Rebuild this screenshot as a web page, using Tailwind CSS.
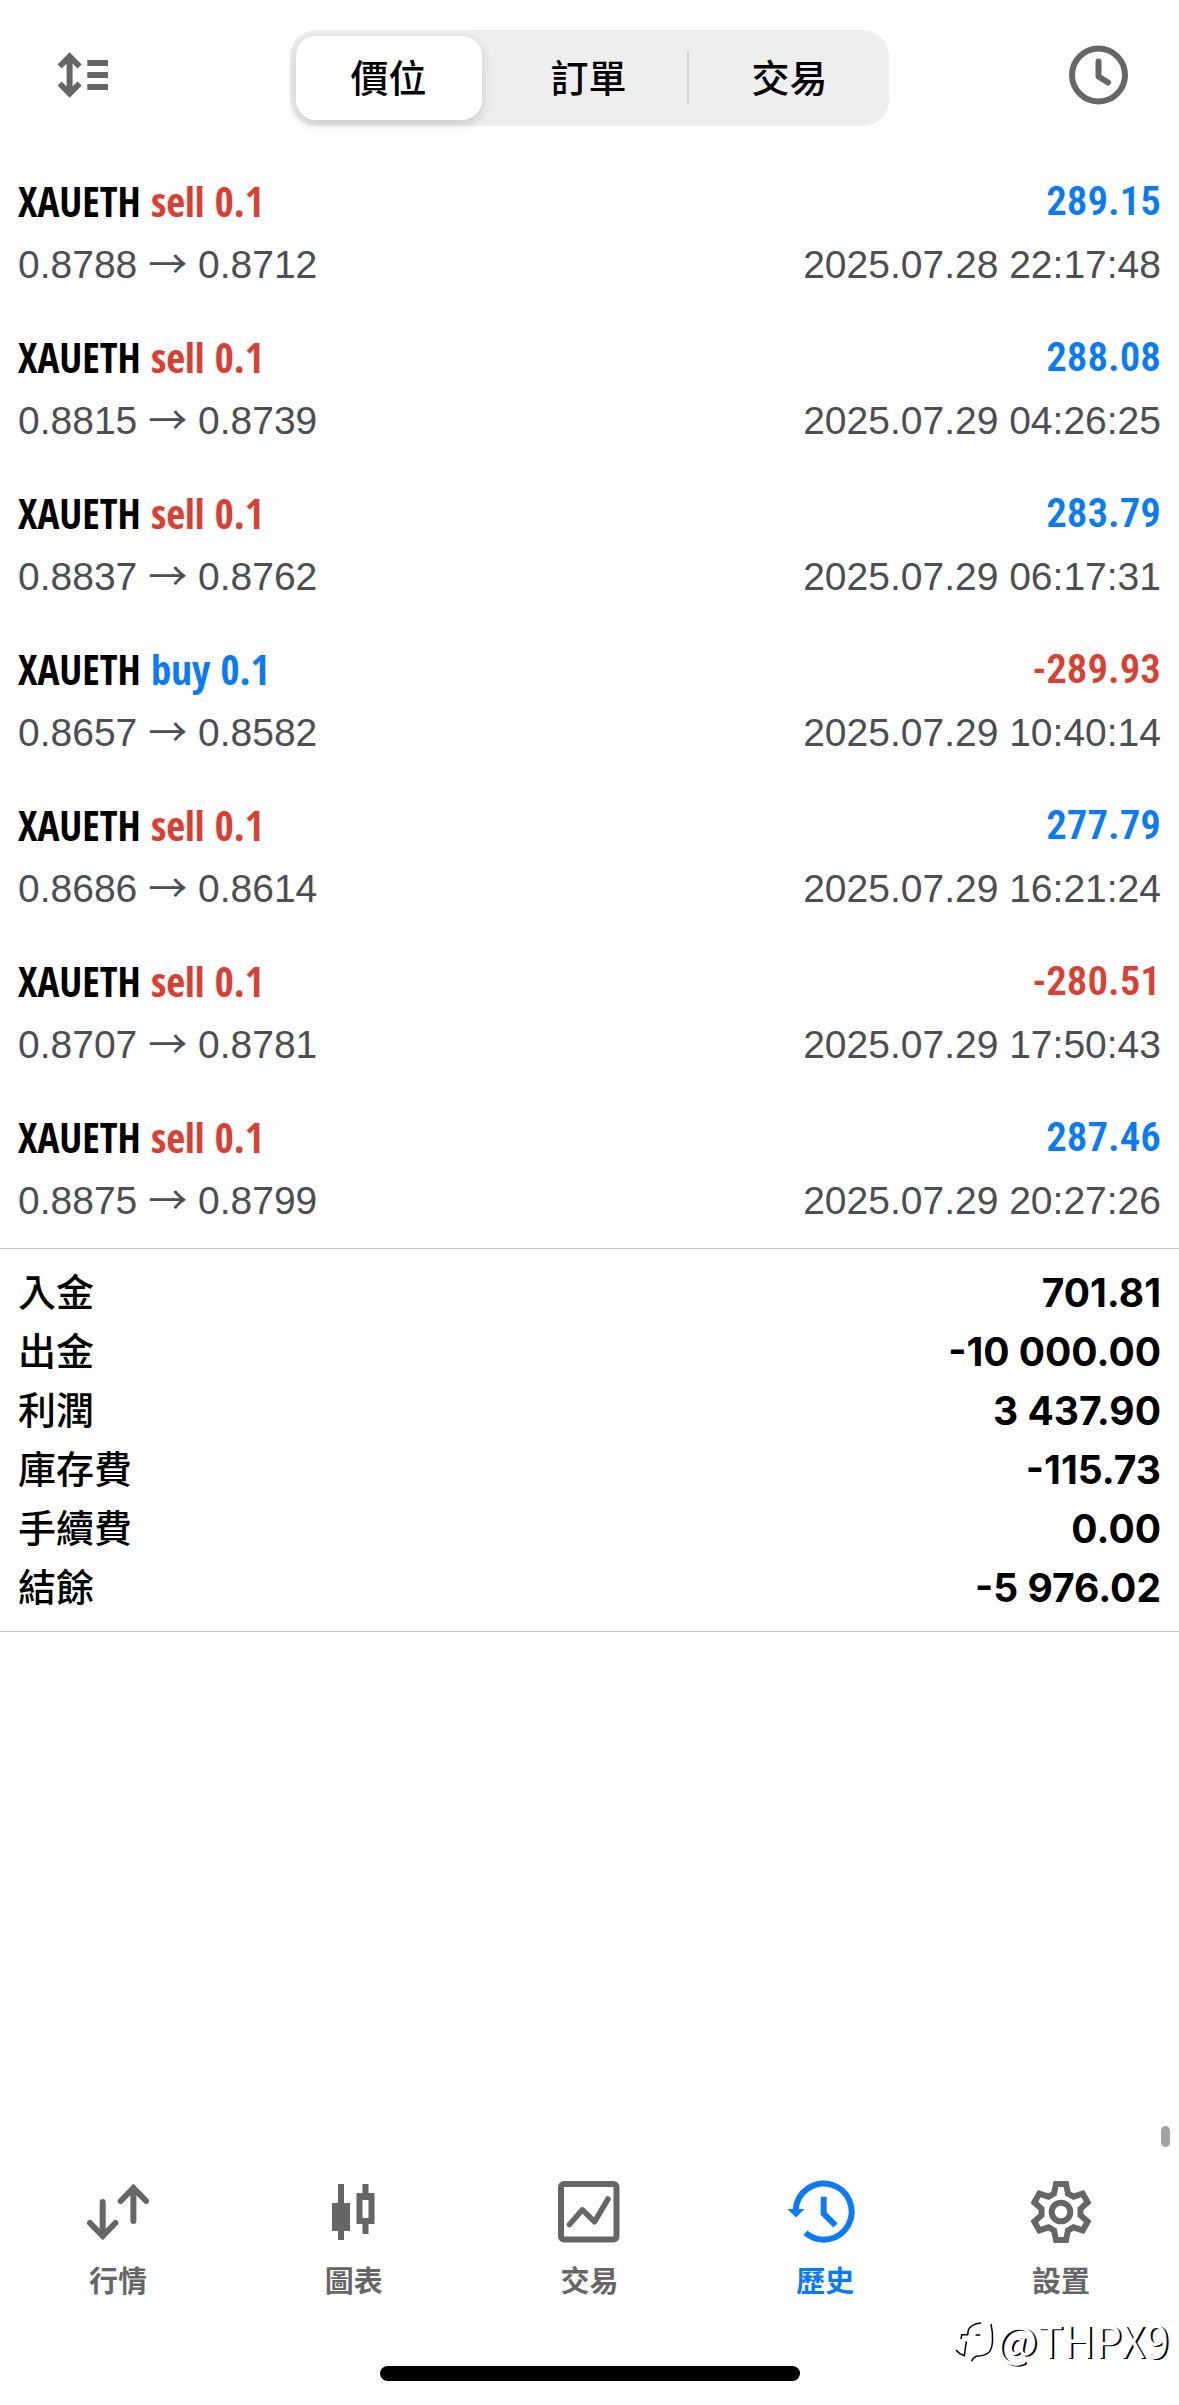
<!DOCTYPE html>
<html lang="zh-Hant">
<head>
<meta charset="utf-8">
<meta name="viewport" content="width=device-width, initial-scale=1">
<title>歷史</title>
<script src="https://cdn.jsdelivr.net/npm/@tailwindcss/browser@4"></script>
</head>
<body class="bg-white text-black font-['Inter','Noto_Sans_CJK_TC',sans-serif]">
<div class="relative flex min-h-screen flex-col">

  <header class="grid grid-cols-[1fr_56%_1fr] items-center px-[54px] py-[30px]">
    <button type="button" aria-label="排序" class="justify-self-start pb-1.5">
      <svg class="block h-[54px] w-[58px]" viewBox="0 0 58 54" fill="none" stroke="#666" stroke-width="6">
        <path d="M15.6 8V46M5.6 18.5L15.6 8.5L25.6 18.5M5.6 35.5L15.6 45.5L25.6 35.5M33.3 15H54M33.3 27H54M33.3 39H54"/>
      </svg>
    </button>
    <div role="group" aria-label="檢視" class="grid h-24 grid-cols-3 rounded-[26px] bg-[#eeeeef] text-[38px] leading-10 font-medium">
      <button type="button" aria-pressed="true" class="my-1.5 mr-2 ml-1.5 rounded-[20px] bg-white shadow-[0_4px_12px_rgba(0,0,0,0.16)]">價位</button>
      <button type="button" aria-pressed="false" class="my-[21px] border-r-2 border-[#d3d3d5]">訂單</button>
      <button type="button" aria-pressed="false">交易</button>
    </div>
    <button type="button" aria-label="時間範圍" class="justify-self-end pb-1.5">
      <svg class="block size-[54px] overflow-visible" viewBox="0 0 54 54" fill="none" stroke="#666" stroke-width="6" stroke-linecap="round" stroke-linejoin="round">
        <circle cx="27.5" cy="27" r="26.5"/>
        <path d="M27.5 13.5V28.5L37 34.5"/>
      </svg>
    </button>
  </header>

  <main class="grow">
    <ul id="deals"></ul>

    <dl class="grid grid-cols-[auto_1fr] border-y border-[#c8c8ca] px-[18px] py-3.5 text-[39px] leading-[59px]">
      <dt class="text-[38px] font-medium">入金</dt><dd class="text-right font-bold">701.81</dd>
      <dt class="text-[38px] font-medium">出金</dt><dd class="text-right font-bold">-10 000.00</dd>
      <dt class="text-[38px] font-medium">利潤</dt><dd class="text-right font-bold">3 437.90</dd>
      <dt class="text-[38px] font-medium">庫存費</dt><dd class="text-right font-bold">-115.73</dd>
      <dt class="text-[38px] font-medium">手續費</dt><dd class="text-right font-bold">0.00</dd>
      <dt class="text-[38px] font-medium">結餘</dt><dd class="text-right font-bold">-5 976.02</dd>
    </dl>
  </main>

  <nav class="grid grid-cols-5 text-[29px] leading-9 font-bold text-[#666]">
    <a href="#quotes" class="flex flex-col items-center gap-4">
      <svg class="size-[72px]" viewBox="0 0 72 72" fill="none" stroke="currentColor" stroke-width="6" stroke-linecap="round">
        <path d="M20.7 26V60M8 47L20.7 60L33.4 47M51.4 45V12M38.7 25L51.4 12L64.1 25"/>
      </svg>
      行情
    </a>
    <a href="#charts" class="flex flex-col items-center gap-4">
      <svg class="size-[72px]" viewBox="0 0 72 72" fill="currentColor">
        <path d="M20 8h6v19h6v28h-6v9h-6v-9h-6V27h6z"/>
        <path fill-rule="evenodd" d="M44.5 8h6v9h6v31h-6v10h-6V48h-6V17h6zM44.5 24v18h6V24z"/>
      </svg>
      圖表
    </a>
    <a href="#trade" class="flex flex-col items-center gap-4">
      <svg class="size-[72px]" viewBox="0 0 72 72" fill="none" stroke="currentColor" stroke-width="6" stroke-linecap="round" stroke-linejoin="round">
        <rect x="8" y="8" width="55.5" height="55.5" rx="3"/>
        <path stroke-width="5.5" d="M16.5 48.5L29.3 33.8L41.5 45.8L55 23"/>
      </svg>
      交易
    </a>
    <a href="#history" aria-current="page" class="flex flex-col items-center gap-4 text-[#0a7af5]">
      <svg class="size-[72px] overflow-visible" viewBox="0 0 72 72" fill="none" stroke="currentColor" stroke-width="6">
        <path d="M6.7 34A28 28 0 1 1 16.4 56.8M34.7 20.7V37.5L46.5 49.5"/>
        <path fill="currentColor" stroke="none" d="M-1.5 33H15.5L7 41.5z"/>
      </svg>
      歷史
    </a>
    <a href="#settings" class="flex flex-col items-center gap-4">
      <svg class="size-[72px]" viewBox="-36 -36 72 72" fill="none" stroke="currentColor" stroke-width="6">
        <path d="M-5 -28H5L7 -18.5L12.5 -15.3L21.7 -18.3L26.7 -9.7L19.5 -3.2V3.2L26.7 9.7L21.7 18.3L12.5 15.3L7 18.5L5 28H-5L-7 18.5L-12.5 15.3L-21.7 18.3L-26.7 9.7L-19.5 3.2V-3.2L-26.7 -9.7L-21.7 -18.3L-12.5 -15.3L-7 -18.5z"/>
        <circle r="9.3"/>
      </svg>
      設置
    </a>
  </nav>
  <div class="mx-auto mt-[66px] mb-6 h-[15px] w-[420px] rounded-full bg-black"></div>

  <div class="absolute right-[9px] bottom-[258px] h-[21px] w-[9px] rounded-full bg-[#a3a3a3]"></div>

  <div class="absolute right-[10px] bottom-[36px] flex items-center gap-1 font-['Noto_Sans_CJK_SC',sans-serif] text-[43px] leading-[60px] font-normal text-white [text-shadow:2px_1px_0_#000]">
    <svg class="mt-1 h-[40px] w-[39px] overflow-visible" viewBox="0 0 39 40" fill="none" stroke="#000" stroke-width="1.5">
      <path d="M7 18L7.7 13.7H13.7L14.3 9Q17 3 27 2M2 29Q5 33 10.3 34.7L12.3 20.3M21.7 14H26.3"/>
      <path d="M37 3Q39 12 38.5 20Q38 28 35 31.3Q31 35 22 35.3Q18.5 37 17.7 40.3"/>
    </svg>
    <span>@THPX9</span>
  </div>
</div>

<script>
  const deals = [
    ['sell', '0.8788', '0.8712', '289.15', '2025.07.28 22:17:48'],
    ['sell', '0.8815', '0.8739', '288.08', '2025.07.29 04:26:25'],
    ['sell', '0.8837', '0.8762', '283.79', '2025.07.29 06:17:31'],
    ['buy', '0.8657', '0.8582', '-289.93', '2025.07.29 10:40:14'],
    ['sell', '0.8686', '0.8614', '277.79', '2025.07.29 16:21:24'],
    ['sell', '0.8707', '0.8781', '-280.51', '2025.07.29 17:50:43'],
    ['sell', '0.8875', '0.8799', '287.46', '2025.07.29 20:27:26'],
  ];
  const blue = 'text-[#0a7af5]', red = 'text-[#d93f33]';
  document.getElementById('deals').innerHTML = deals.map(([side, open, close, profit, time]) => `
    <li class="px-[18px] pt-4 pb-3.5">
      <div class="flex h-15 items-center justify-between font-semibold">
        <span class="font-['Open_Sans_Condensed','Open_Sans',sans-serif] text-[41px]">XAUETH <span class="${side === 'buy' ? blue : red}">${side} 0.1</span></span>
        <span class="font-['Roboto_Condensed','Roboto',sans-serif] text-[41px] ${profit.startsWith('-') ? red : blue}">${profit}</span>
      </div>
      <div class="flex h-[66px] items-center justify-between font-['Liberation_Sans',sans-serif] text-[39px] text-[#4d4e52]">
        <span>${open} <span class="font-['Noto_Sans_CJK_TC',sans-serif] leading-none">→</span> ${close}</span>
        <time>${time}</time>
      </div>
    </li>`).join('');
</script>
</body>
</html>
